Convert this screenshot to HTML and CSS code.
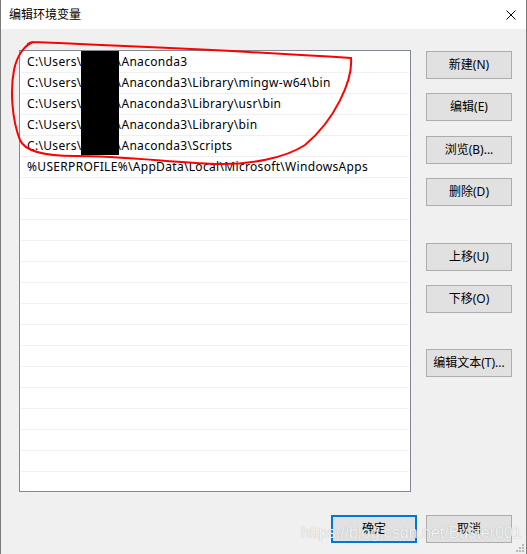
FILE: index.html
```html
<!DOCTYPE html>
<html lang="zh-CN">
<head>
<meta charset="utf-8">
<title>编辑环境变量</title>
<link rel="stylesheet" href="styles.css">
</head>
<body>
<div class="window">
  <div class="titlebar">
    <span class="title">编辑环境变量</span>
    <svg class="close" width="10" height="10" viewBox="0 0 10 10"><path d="M0.5 0.5 L9.5 9.5 M9.5 0.5 L0.5 9.5" stroke="#000" stroke-width="1" fill="none"/></svg>
  </div>
  <div class="body">
    <div class="content">
      <div class="list">
        <div class="row">C:\Users\<span class="user"></span>\Anaconda3</div>
        <div class="row">C:\Users\<span class="user"></span>\Anaconda3\Library\mingw-w64\bin</div>
        <div class="row">C:\Users\<span class="user"></span>\Anaconda3\Library\usr\bin</div>
        <div class="row">C:\Users\<span class="user"></span>\Anaconda3\Library\bin</div>
        <div class="row">C:\Users\<span class="user"></span>\Anaconda3\Scripts</div>
        <div class="row">%USERPROFILE%\AppData\Local\Microsoft\WindowsApps</div>
        <div class="row"></div><div class="row"></div><div class="row"></div><div class="row"></div>
        <div class="row"></div><div class="row"></div><div class="row"></div><div class="row"></div>
        <div class="row"></div><div class="row"></div><div class="row"></div><div class="row"></div>
        <div class="row"></div><div class="row"></div>
      </div>
      <div class="side">
        <button class="btn">新建(N)</button>
        <button class="btn g14">编辑(E)</button>
        <button class="btn g15">浏览(B)...</button>
        <button class="btn g14">删除(D)</button>
        <button class="btn g37">上移(U)</button>
        <button class="btn g14">下移(O)</button>
        <button class="btn g36">编辑文本(T)...</button>
      </div>
    </div>
    <div class="footer">
      <button class="btn primary">确定</button>
      <button class="btn">取消</button>
    </div>
  </div>
  <div class="redact"></div>
  <svg class="scribble" width="527" height="554" viewBox="0 0 527 554">
    <path d="M28 44 C 30 43, 31 42, 33 42 C 130 46, 260 52, 351 58 C 353 80, 335 120, 305 145 C 285 158, 250 165, 215 164 C 170 162, 120 156, 75 156 C 45 156, 25 152, 20 140 C 12 120, 10 90, 14 70 C 17 55, 25 45, 33 42" fill="none" stroke="#ff0000" stroke-width="2" stroke-linecap="round"/>
  </svg>
  <div class="watermark">https://blog.csdn.net/Buster001</div>
  <svg class="grip" width="10" height="10" viewBox="0 0 10 10">
    <rect x="7" y="1" width="2" height="2" fill="#b8b8b8"/>
    <rect x="4" y="4" width="2" height="2" fill="#b8b8b8"/>
    <rect x="7" y="4" width="2" height="2" fill="#b8b8b8"/>
    <rect x="1" y="7" width="2" height="2" fill="#b8b8b8"/>
    <rect x="4" y="7" width="2" height="2" fill="#b8b8b8"/>
    <rect x="7" y="7" width="2" height="2" fill="#b8b8b8"/>
  </svg>
</div>
</body>
</html>
```
FILE: styles.css
```css
* { box-sizing: border-box; }
html, body { margin: 0; padding: 0; }
body {
  font-family: "Noto Sans", "Noto Sans CJK SC", sans-serif;
  font-size: 12px;
  color: #000;
  background: #f0f0f0;
}
.window {
  position: relative;
  width: 527px;
  height: 554px;
  border-left: 1px solid #7a7a7a;
  border-right: 1px solid #7a7a7a;
  background: #f0f0f0;
  overflow: hidden;
}
.titlebar {
  height: 29px;
  background: #fff;
  display: flex;
  align-items: center;
  justify-content: space-between;
  padding: 0 10px 1px 8px;
}
.title {
  font-family: "Noto Sans CJK SC", sans-serif;
  font-size: 12px;
  line-height: 14px;
}
.close { display: block; margin-top: 1px; }
.body {
  padding: 21px 14px 0 18px;
}
.content {
  display: flex;
  gap: 15px;
}
.list {
  width: 392px;
  height: 442px;
  border: 1px solid #828790;
  background: #fff;
  padding: 1px 1px 0 1px;
}
.row {
  height: 21px;
  border-bottom: 1px solid #f0f0f0;
  line-height: 20px;
  padding-left: 6px;
  white-space: nowrap;
  overflow: hidden;
  letter-spacing: 0.32px;
}
.user {
  display: inline-block;
  width: 35px;
}
.side {
  display: flex;
  flex-direction: column;
  padding-top: 1px;
}
.btn {
  width: 86px;
  height: 28px;
  background: #e1e1e1;
  border: 1px solid #adadad;
  font-family: "Noto Sans", "Noto Sans CJK SC", sans-serif;
  font-size: 12px;
  color: #000;
  padding: 0;
  line-height: 26px;
}
.g14 { margin-top: 14px; }
.g15 { margin-top: 15px; }
.g37 { margin-top: 37px; }
.g36 { margin-top: 36px; }
.footer {
  display: flex;
  justify-content: flex-end;
  gap: 9px;
  margin-top: 23px;
}
.primary {
  border: 2px solid #0078d7;
  line-height: 24px;
}
.redact {
  position: absolute;
  left: 80px;
  top: 51px;
  width: 38px;
  height: 104px;
  background: #000;
}
.scribble {
  position: absolute;
  left: -1px;
  top: 0;
  pointer-events: none;
}
.watermark {
  position: absolute;
  left: 300px;
  top: 524px;
  font-family: "Liberation Sans", Arial, sans-serif;
  font-size: 16px;
  line-height: 18px;
  color: rgba(255, 255, 255, 0.85);
  text-shadow: 0 0 1px rgba(120, 120, 120, 0.6);
  white-space: nowrap;
}
.grip {
  position: absolute;
  right: 1px;
  bottom: 1px;
}
```
